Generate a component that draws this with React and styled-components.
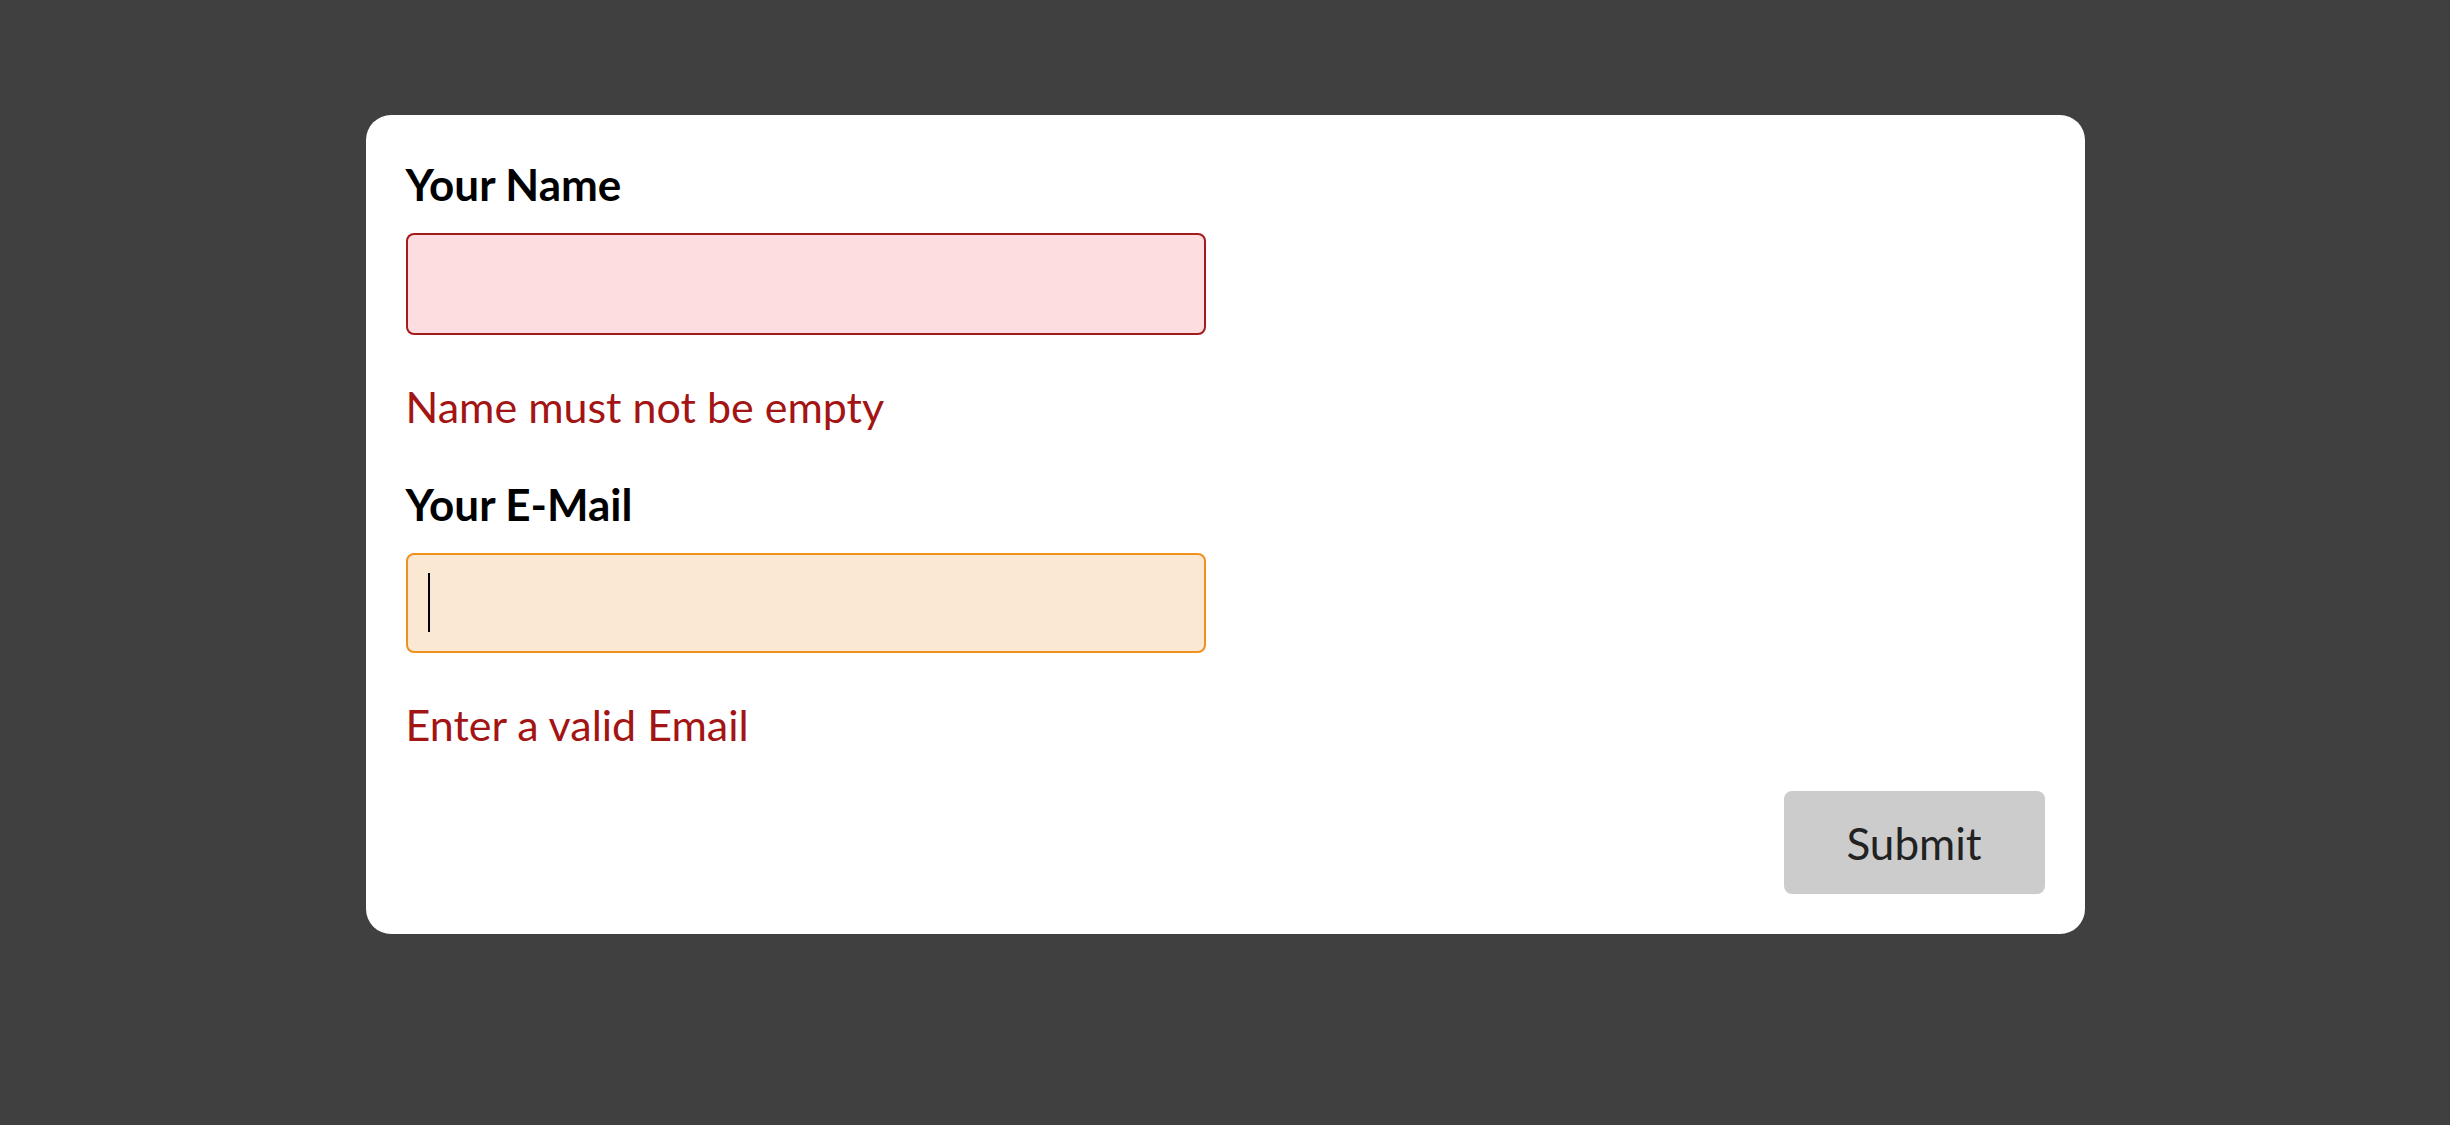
import React from "react";
import styled, { createGlobalStyle } from "styled-components";

const GlobalStyle = createGlobalStyle`
  html, body {
    margin: 0;
    padding: 0;
    background: #404040;
  }
  body {
    font-family: Lato, "Open Sans", "Liberation Sans", sans-serif;
  }
  * { box-sizing: border-box; }
`;

const Page = styled.div`
  min-height: 1125px;
  background: #404040;
  display: flex;
  justify-content: center;
  align-items: flex-start;
  padding-top: 115px;
`;

const Card = styled.form`
  width: 1719px;
  background: #ffffff;
  border-radius: 25px;
  padding: 40px;
  display: flex;
  flex-direction: column;
  align-items: flex-start;
`;

const Label = styled.label`
  display: block;
  font-size: 44px;
  font-weight: 700;
  line-height: 55px;
  padding-top: 2px;
  color: #000;
  margin-top: ${(p) => p.$mt || 0}px;
`;

const InputWrap = styled.div`
  position: relative;
  width: 800px;
  margin-top: 21px;
`;

const Input = styled.input`
  display: block;
  width: 100%;
  height: ${(p) => p.$h}px;
  border-radius: 8px;
  border: 2px solid ${(p) => (p.$tone === "warn" ? "#ef901f" : "#a51a1a")};
  background: ${(p) => (p.$tone === "warn" ? "#fae8d3" : "#fddddf")};
  font-family: inherit;
  font-size: 42px;
  padding: 0 21px;
  outline: none;
  caret-color: transparent;
`;

const Caret = styled.span`
  position: absolute;
  left: 22px;
  top: 20px;
  width: 2px;
  height: 59px;
  background: #000;
  pointer-events: none;
`;

const ErrorText = styled.p`
  margin: 44px 0 0;
  font-size: 43px;
  line-height: 55px;
  color: #a31414;
`;

const Actions = styled.div`
  align-self: stretch;
  display: flex;
  justify-content: flex-end;
  margin-top: 39px;
`;

const Button = styled.button`
  width: 261px;
  height: 103px;
  border: none;
  border-radius: 8px;
  background: #cccccc;
  color: #222222;
  font-family: inherit;
  font-size: 44px;
  cursor: pointer;
`;

export default function App() {
  return (
    <>
      <GlobalStyle />
      <Page>
        <Card onSubmit={(e) => e.preventDefault()}>
          <Label htmlFor="name">Your Name</Label>
          <InputWrap>
            <Input id="name" $h={102} $tone="error" />
          </InputWrap>
          <ErrorText>Name must not be empty</ErrorText>

          <Label htmlFor="email" $mt={41}>Your E-Mail</Label>
          <InputWrap>
            <Input id="email" $h={100} $tone="warn" />
            <Caret />
          </InputWrap>
          <ErrorText>Enter a valid Email</ErrorText>

          <Actions>
            <Button type="submit">Submit</Button>
          </Actions>
        </Card>
      </Page>
    </>
  );
}
